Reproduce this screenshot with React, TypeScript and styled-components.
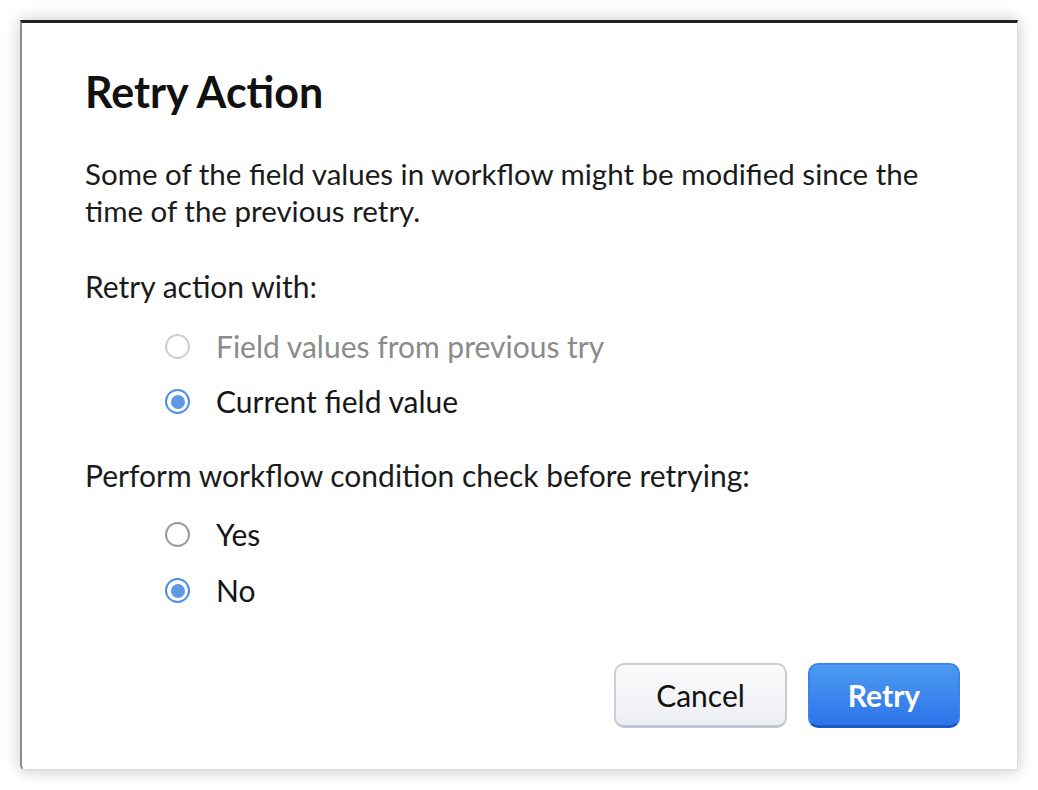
import React, { useState } from "react";
import styled, { createGlobalStyle } from "styled-components";

const GlobalStyle = createGlobalStyle`
  html, body {
    margin: 0;
    padding: 0;
    background: #ffffff;
  }
  body {
    font-family: Lato, "Open Sans", "Liberation Sans", sans-serif;
    color: #1b1b1b;
  }
`;

const Page = styled.div`
  width: 1038px;
  height: 790px;
  padding: 20px 20px 19px 20px;
  box-sizing: border-box;
`;

const Dialog = styled.div`
  box-sizing: border-box;
  width: 998px;
  height: 751px;
  background: #fff;
  border-top: 3px solid #1f2428;
  border-left: 2px solid #8c8c8c;
  border-right: 1px solid #dcdcdc;
  border-bottom: 2px solid #dedede;
  border-bottom-left-radius: 6px;
  box-shadow: 0 0 16px rgba(0, 0, 0, 0.22);
  padding: 45px 57px 0 63px;
  display: flex;
  flex-direction: column;
`;

const Title = styled.h2`
  margin: 0;
  font-size: 43px;
  line-height: 48px;
  font-weight: 700;
  color: #111;
`;

const Text = styled.p<{ $top: number; $size?: number }>`
  margin: ${(p) => p.$top}px 0 0;
  font-size: ${(p) => p.$size ?? 30}px;
  line-height: 37px;
  font-weight: 400;
`;

const RadioList = styled.div<{ $top: number; $gap: number }>`
  margin-top: ${(p) => p.$top}px;
  padding-left: 80px;
  display: flex;
  flex-direction: column;
  gap: ${(p) => p.$gap}px;
`;

const RadioRow = styled.label<{ $disabled?: boolean }>`
  display: flex;
  align-items: center;
  gap: 26px;
  font-size: 30px;
  line-height: 37px;
  color: ${(p) => (p.$disabled ? "#8b8b8b" : "#161616")};
  cursor: ${(p) => (p.$disabled ? "default" : "pointer")};
`;

const Circle = styled.span<{ $checked: boolean; $disabled?: boolean }>`
  box-sizing: border-box;
  width: 25px;
  height: 25px;
  border-radius: 50%;
  flex-shrink: 0;
  border: 2px solid
    ${(p) => (p.$checked ? "#4a8fe4" : p.$disabled ? "#cfcfcf" : "#9a9a9a")};
  display: flex;
  align-items: center;
  justify-content: center;
  background: #fff;
  &::after {
    content: "";
    width: 14px;
    height: 14px;
    border-radius: 50%;
    background: ${(p) => (p.$checked ? "#5f98e3" : "transparent")};
  }
`;

const Footer = styled.div`
  margin-top: 54px;
  display: flex;
  justify-content: flex-end;
  gap: 21px;
`;

const Button = styled.button<{ $primary?: boolean }>`
  box-sizing: border-box;
  height: 65px;
  min-width: ${(p) => (p.$primary ? 152 : 173)}px;
  border-radius: 10px;
  font-family: inherit;
  font-size: 30px;
  font-weight: ${(p) => (p.$primary ? 700 : 400)};
  cursor: pointer;
  color: ${(p) => (p.$primary ? "#fff" : "#111")};
  border: 2px solid ${(p) => (p.$primary ? "#3a82ec" : "#cacbd5")};
  border-bottom: 3px solid ${(p) => (p.$primary ? "#1e58c4" : "#c4c6d1")};
  background: ${(p) =>
    p.$primary
      ? "linear-gradient(#4b9bf1, #2f73ea)"
      : "linear-gradient(#fbfbfc, #eceef3)"};
`;

type Opt = { label: string; disabled?: boolean };

const RadioGroup: React.FC<{
  options: Opt[];
  value: number;
  onChange: (i: number) => void;
  top: number;
  gap: number;
}> = ({ options, value, onChange, top, gap }) => (
  <RadioList $top={top} $gap={gap}>
    {options.map((o, i) => (
      <RadioRow
        key={o.label}
        $disabled={o.disabled}
        onClick={() => !o.disabled && onChange(i)}
      >
        <Circle $checked={value === i} $disabled={o.disabled} />
        {o.label}
      </RadioRow>
    ))}
  </RadioList>
);

export default function App() {
  const [source, setSource] = useState(1);
  const [check, setCheck] = useState(1);

  return (
    <>
      <GlobalStyle />
      <Page>
        <Dialog>
          <Title>Retry Action</Title>
          <Text $top={39} $size={29.5}>
            Some of the field values in workflow might be modified since the
            <br />
            time of the previous retry.
          </Text>
          <Text $top={39}>Retry action with:</Text>
          <RadioGroup
            top={23}
            gap={18}
            value={source}
            onChange={setSource}
            options={[
              { label: "Field values from previous try", disabled: true },
              { label: "Current field value" },
            ]}
          />
          <Text $top={37}>Perform workflow condition check before retrying:</Text>
          <RadioGroup
            top={22}
            gap={19}
            value={check}
            onChange={setCheck}
            options={[{ label: "Yes" }, { label: "No" }]}
          />
          <Footer>
            <Button>Cancel</Button>
            <Button $primary>Retry</Button>
          </Footer>
        </Dialog>
      </Page>
    </>
  );
}
